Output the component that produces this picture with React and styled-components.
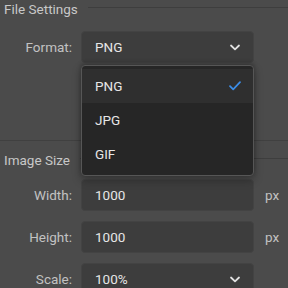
import React from 'react';
import styled, { createGlobalStyle } from 'styled-components';

const GlobalStyle = createGlobalStyle`
  html, body {
    margin: 0;
    padding: 0;
    background: #4b4b4b;
    font-family: Roboto, 'Liberation Sans', sans-serif;
    overflow: hidden;
  }
`;

const Panel = styled.div`
  width: 288px;
  height: 288px;
  overflow: hidden;
  background: #4b4b4b;
`;

const Section = styled.section`
  display: flex;
  flex-direction: column;
  gap: ${(p) => p.$gap || 10}px;
  padding: ${(p) => p.$pad || '0'};
  border-bottom: ${(p) => (p.$divider ? '1px solid #404040' : 'none')};
`;

const Legend = styled.div`
  display: flex;
  align-items: flex-start;
  gap: 10px;
  height: 18px;
  padding-left: 4px;
  font-size: 13.5px;
  line-height: 18px;
  color: #c8c8c8;
  white-space: nowrap;
`;

const LegendLine = styled.div`
  flex: 1;
  height: 1px;
  margin-top: ${(p) => p.$offset || 7}px;
  background: #3e3e3e;
`;

const Row = styled.div`
  display: grid;
  grid-template-columns: 72px 173px 24px;
  column-gap: 9px;
  align-items: center;
  height: 32px;
`;

const Label = styled.label`
  text-align: right;
  font-size: 13.5px;
  color: #c2c2c2;
`;

const Unit = styled.span`
  font-size: 13.5px;
  color: #c2c2c2;
  padding-left: 2px;
`;

const Field = styled.div`
  position: relative;
  display: flex;
  align-items: center;
  justify-content: space-between;
  box-sizing: border-box;
  height: 32px;
  padding: 0 12px 0 13px;
  background: #3d3d3d;
  border: 1px solid #434343;
  border-radius: 4px;
  font-size: 13.5px;
  color: #e6e6e6;
`;

const Menu = styled.ul`
  position: absolute;
  top: calc(100% + 3px);
  left: -1px;
  right: -1px;
  margin: 0;
  padding: 3px 0 4px;
  list-style: none;
  background: #262626;
  border: 1px solid #565656;
  border-radius: 4px;
  box-shadow: 0 -2px 4px rgba(0, 0, 0, 0.25), 0 4px 10px rgba(0, 0, 0, 0.3);
  z-index: 10;
`;

const Option = styled.li`
  display: flex;
  align-items: center;
  justify-content: space-between;
  height: 34px;
  padding: 0 12px 0 13px;
  font-size: 13.5px;
  color: #e6e6e6;
  background: ${(p) => (p.$active ? '#2f2f2f' : 'transparent')};
`;

function Chevron() {
  return (
    <svg width="12" height="7" viewBox="0 0 12 7" fill="none">
      <path d="M2 1.5 L6 5.3 L10 1.5" stroke="#e2e2e2" strokeWidth="1.8" strokeLinecap="round" strokeLinejoin="round" />
    </svg>
  );
}

function Check() {
  return (
    <svg width="12" height="10" viewBox="0 0 12 10" fill="none">
      <path d="M1 5.2 L4.2 8.4 L11 1.2" stroke="#3b8de8" strokeWidth="1.7" strokeLinecap="round" strokeLinejoin="round" />
    </svg>
  );
}

const formats = ['PNG', 'JPG', 'GIF'];

export default function App() {
  return (
    <Panel>
      <GlobalStyle />
      <Section $divider $gap={13} $pad="0 0 77px 0">
        <Legend>
          File Settings
          <LegendLine $offset={7} />
        </Legend>
        <Row>
          <Label>Format:</Label>
          <Field>
            PNG
            <Chevron />
            <Menu>
              {formats.map((f) => (
                <Option key={f} $active={f === 'PNG'}>
                  {f}
                  {f === 'PNG' && <Check />}
                </Option>
              ))}
            </Menu>
          </Field>
        </Row>
      </Section>
      <Section $gap={10} $pad="10px 0 0 0">
        <Legend>
          Image Size
          <LegendLine $offset={7} />
        </Legend>
        <Row>
          <Label>Width:</Label>
          <Field>1000</Field>
          <Unit>px</Unit>
        </Row>
        <Row>
          <Label>Height:</Label>
          <Field>1000</Field>
          <Unit>px</Unit>
        </Row>
        <Row>
          <Label>Scale:</Label>
          <Field>
            100%
            <Chevron />
          </Field>
        </Row>
      </Section>
    </Panel>
  );
}
